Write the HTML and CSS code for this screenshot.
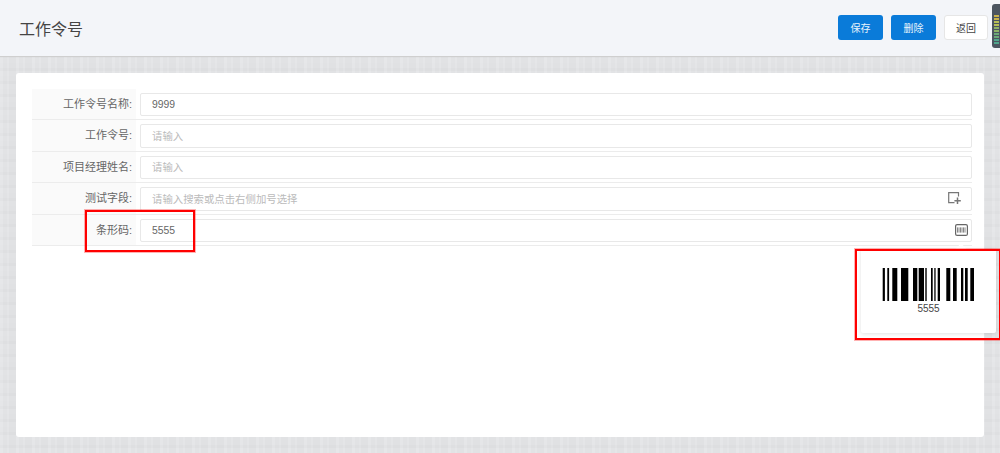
FILE: index.html
```html
<!DOCTYPE html>
<html lang="zh-CN">
<head>
<meta charset="utf-8">
<title>工作令号</title>
<link rel="stylesheet" href="styles.css">
</head>
<body>
<div class="page">
  <header class="topbar">
    <h1 class="title">工作令号</h1>
    <div class="actions">
      <button class="btn btn-primary">保存</button>
      <button class="btn btn-primary">删除</button>
      <button class="btn btn-default">返回</button>
    </div>
  </header>
  <main class="content">
    <section class="card">
      <div class="row">
        <label class="row-label">工作令号名称:</label>
        <div class="row-field"><div class="input">9999</div></div>
      </div>
      <div class="row">
        <label class="row-label">工作令号:</label>
        <div class="row-field"><div class="input placeholder">请输入</div></div>
      </div>
      <div class="row">
        <label class="row-label">项目经理姓名:</label>
        <div class="row-field"><div class="input placeholder">请输入</div></div>
      </div>
      <div class="row">
        <label class="row-label">测试字段:</label>
        <div class="row-field"><div class="input placeholder"><span class="grow">请输入搜索或点击右侧加号选择</span>
          <svg class="icon-plus" width="13" height="12" viewBox="0 0 13 12" fill="none" stroke="#777" stroke-width="1.2"><path d="M10.5 4.5V.7H.7v10h5.8"/><path d="M9.5 5.6v6.4M6.4 8.8h6.4" stroke-width="1.5"/></svg>
        </div></div>
      </div>
      <div class="row">
        <label class="row-label">条形码:</label>
        <div class="row-field"><div class="input"><span class="grow">5555</span>
          <svg class="icon-barcode" width="13" height="12" viewBox="0 0 13 12"><rect x=".6" y=".6" width="11.8" height="10.8" rx="1.5" fill="#fff" stroke="#666" stroke-width="1.2"/><path d="M2.5 3.4v5.2M4 3.4v5.2M5.5 3.4v5.2M7 3.4v5.2M8.5 3.4v5.2M10 3.4v5.2" stroke="#888" stroke-width="1"/></svg>
        </div></div>
      </div>
    </section>
  </main>
</div>

<div class="meter"><i class="l1"></i><i class="l1"></i><i class="l2"></i><i class="l2"></i><i class="l3"></i><i class="l3"></i><i class="l4"></i><i class="l4"></i><i class="l5"></i><i class="l5"></i></div>

<div class="popover">
  <svg class="barcode" width="92" height="33" viewBox="0 0 92 33" fill="#000">
    <rect x="0.7" width="2.2" height="33"/><rect x="5.3" width="1.8" height="33"/><rect x="10.3" width="5" height="33"/><rect x="19" width="7.3" height="33"/><rect x="31" width="4.3" height="33"/><rect x="36.7" width="5.3" height="33"/><rect x="43.3" width="1.4" height="33"/><rect x="49" width="1.7" height="33"/><rect x="52.3" width="1.3" height="33"/><rect x="55.7" width="2.3" height="33"/><rect x="64.3" width="4" height="33"/><rect x="71" width="3.7" height="33"/><rect x="79" width="2.3" height="33"/><rect x="83" width="2.7" height="33"/><rect x="88.3" width="3.7" height="33"/>
  </svg>
  <div class="barcode-text">5555</div>
</div>
<div class="popover-arrow"></div>

<div class="mark mark-field"></div>
<div class="mark mark-popover"></div>
</body>
</html>
```
FILE: styles.css
```css
* { box-sizing: border-box; }
html, body { margin: 0; padding: 0; height: 100%; overflow: hidden; }
body {
  font-family: "Liberation Sans", "Noto Sans CJK SC", sans-serif;
  color: #555;
  background-color: #e2e3e5;
  background-image:
    repeating-linear-gradient(90deg, rgba(255,255,255,.07) 0 3px, rgba(0,0,0,.006) 3px 7px, rgba(255,255,255,.04) 7px 9px, rgba(0,0,0,.01) 9px 16px),
    repeating-linear-gradient(0deg, rgba(255,255,255,.06) 0 5px, rgba(0,0,0,.008) 5px 8px, rgba(255,255,255,.03) 8px 13px);
}
.page { display: flex; flex-direction: column; height: 453px; }
.topbar {
  display: flex;
  align-items: center;
  justify-content: space-between;
  height: 57px;
  padding: 0 12px 1px 19px;
  background: #f3f5f9;
  border-bottom: 1px solid #cfcfcf;
  flex: none;
}
.title { margin: 0; font-size: 16px; font-weight: 400; color: #444; }
.actions { display: flex; gap: 8px; }
.btn {
  width: 45px;
  height: 25px;
  padding: 0;
  border-radius: 3px;
  font: 10px "Liberation Sans", "Noto Sans CJK SC", sans-serif;
  border: 1px solid transparent;
}
.btn-primary { background: #0a7bd9; color: #e8f3fc; }
.btn-default { width: 44px; background: #fff; border-color: #e6e6e6; color: #444; }
.content { flex: 1; padding: 16px; }
.card { height: 364px; background: #fff; border-radius: 3px; padding: 16px 12px 0 16px; }
.row { display: flex; height: 31.4px; border-bottom: 1px solid #ececec; }
.row-label {
  width: 104px;
  flex: none;
  background: #fafafa;
  font-size: 11px;
  color: #666;
  text-align: right;
  line-height: 30px;
  padding-right: 4px;
}
.row-field { flex: 1; padding: 4px 0 3px 4px; }
.input {
  display: flex;
  align-items: center;
  height: 100%;
  padding: 0 3px 0 11px;
  border: 1px solid #e8e8e8;
  border-radius: 2px;
  background: #fff;
  font-size: 10.4px;
  color: #666;
}
.placeholder { color: #bbb; padding-bottom: 1px; }
.grow { flex: 1; }
.icon-plus { margin-right: 7px; }
.meter {
  position: absolute;
  left: 992px;
  top: 4px;
  width: 12px;
  height: 44px;
  padding: 11px 2px 2px;
  background: #4c5560;
  border-radius: 3px;
  display: flex;
  flex-direction: column;
  gap: 1px;
}
.meter i { display: block; height: 2px; width: 5px; }
.l1 { background: #c9b24c; }
.l2 { background: #b7bf55; }
.l3 { background: #8db366; }
.l4 { background: #6aa878; }
.l5 { background: #4fa58c; }
.popover {
  position: absolute;
  left: 861px;
  top: 249px;
  width: 135px;
  height: 84px;
  background: #fff;
  box-shadow: 0 1px 4px rgba(0,0,0,.12);
  border-radius: 2px;
  padding-top: 19px;
  text-align: center;
}
.barcode { display: block; margin-left: 21px; }
.barcode-text { font-size: 10px; line-height: 11px; margin-top: 2px; color: #444; }
.popover-arrow {
  position: absolute;
  left: 957px;
  top: 245px;
  width: 8px;
  height: 8px;
  background: #fff;
  transform: rotate(45deg);
}
.mark { position: absolute; border: 2px solid #f00; box-shadow: 0 0 0 1px rgba(255,0,0,.3); }
.mark-field { left: 85px; top: 210px; width: 110px; height: 42px; }
.mark-popover { left: 855px; top: 249px; width: 146px; height: 91px; }
```
